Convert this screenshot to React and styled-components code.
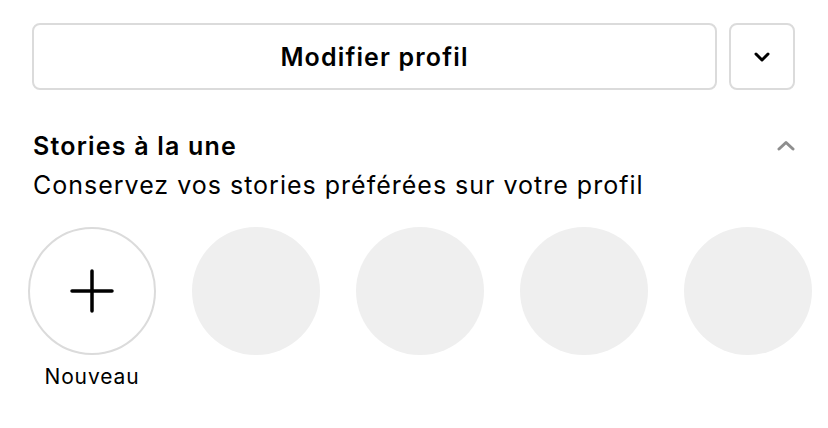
import React from "react";
import styled, { createGlobalStyle } from "styled-components";

const Global = createGlobalStyle`
  html, body { margin: 0; padding: 0; background: #fff; }
  body { font-family: Inter, "Noto Sans", "Liberation Sans", sans-serif; color: #000; -webkit-font-smoothing: antialiased; }
`;

const Page = styled.div`
  width: 828px;
  height: 428px;
  overflow: hidden;
  box-sizing: border-box;
  padding: 23px 33px 0 32px;
  display: flex;
  flex-direction: column;
`;

const ButtonRow = styled.div`
  display: flex;
  gap: 12px;
`;

const Button = styled.button`
  box-sizing: border-box;
  height: 67px;
  flex: ${(p) => (p.$square ? "0 0 66px" : "1 1 auto")};
  border: 2px solid #dbdbdb;
  border-radius: 8px;
  background: #fff;
  font-family: inherit;
  font-size: 25px;
  letter-spacing: 1.15px;
  font-weight: 600;
  color: #000;
  display: flex;
  align-items: center;
  justify-content: center;
  padding: 0;
`;

const Section = styled.div`
  margin-top: 38px;
  display: flex;
  flex-direction: column;
`;

const HeaderRow = styled.div`
  display: flex;
  align-items: center;
  justify-content: space-between;
  height: 36px;
`;

const Title = styled.div`
  font-size: 25px;
  letter-spacing: 1.2px;
  font-weight: 600;
  padding-left: 1px;
`;

const Subtitle = styled.div`
  font-size: 25px;
  letter-spacing: 1px;
  font-weight: 400;
  margin-top: 3px;
  padding-left: 1px;
  line-height: 36px;
`;

const Stories = styled.div`
  display: flex;
  gap: 36px;
  margin-left: -4px;
  margin-top: 24px;
`;

const Story = styled.div`
  flex: 0 0 128px;
  display: flex;
  flex-direction: column;
  align-items: center;
`;

const Circle = styled.div`
  box-sizing: border-box;
  width: 128px;
  height: 128px;
  border-radius: 50%;
  background: ${(p) => (p.$empty ? "#efefef" : "#fff")};
  border: ${(p) => (p.$empty ? "none" : "2px solid #dbdbdb")};
  display: flex;
  align-items: center;
  justify-content: center;
`;

const Label = styled.div`
  margin-top: 9px;
  font-size: 21px;
  letter-spacing: 0.9px;
  color: #000;
`;

export default function App() {
  return (
    <>
      <Global />
      <Page>
        <ButtonRow>
          <Button>Modifier profil</Button>
          <Button $square aria-label="Plus">
            <svg width="16" height="10" viewBox="0 0 16 10">
              <path d="M2 2 L8 8 L14 2" fill="none" stroke="#000" strokeWidth="3" strokeLinecap="round" strokeLinejoin="round" />
            </svg>
          </Button>
        </ButtonRow>
        <Section>
          <HeaderRow>
            <Title>Stories à la une</Title>
            <svg width="18" height="12" viewBox="0 0 18 12">
              <path d="M2 9 L9 2.5 L16 9" fill="none" stroke="#8e8e8e" strokeWidth="3" strokeLinecap="round" strokeLinejoin="round" />
            </svg>
          </HeaderRow>
          <Subtitle>Conservez vos stories préférées sur votre profil</Subtitle>
        </Section>
        <Stories>
          <Story>
            <Circle>
              <svg width="44" height="44" viewBox="0 0 44 44">
                <path d="M22 2 V42 M2 22 H42" stroke="#000" strokeWidth="3.5" strokeLinecap="round" />
              </svg>
            </Circle>
            <Label>Nouveau</Label>
          </Story>
          {[0, 1, 2, 3].map((i) => (
            <Story key={i}>
              <Circle $empty />
            </Story>
          ))}
        </Stories>
      </Page>
    </>
  );
}
